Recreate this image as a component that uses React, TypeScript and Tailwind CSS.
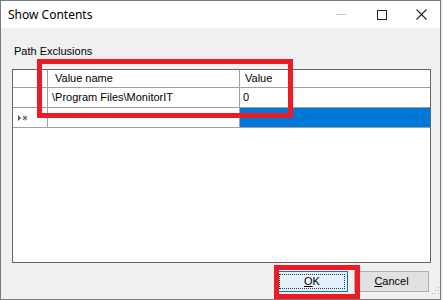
import React from "react";

export default function App() {
  const f = { fontFamily: '"Liberation Sans", Arial, sans-serif' };
  return (
    <div className="w-[443px] h-[300px] bg-[#f0f0f0] relative overflow-hidden" style={f}>
      <div className="w-[441px] h-[300px] border border-[#7a7a7a] flex flex-col bg-[#f0f0f0]">
        {/* title bar */}
        <div className="h-[27px] bg-white flex items-center shrink-0">
          <span className="pl-[7px] text-[12px] text-black" style={{ fontFamily: '"Noto Sans", "Open Sans", sans-serif' }}>Show Contents</span>
          <div className="ml-auto flex items-center h-full">
            <div className="w-[41px] h-full flex items-center justify-center">
              <div className="w-[10px] h-px bg-[#c8c8c8]" />
            </div>
            <div className="w-[41px] h-full flex items-center justify-center">
              <div className="w-[10px] h-[10px] border border-[#222]" />
            </div>
            <div className="w-[38px] h-full flex items-center justify-center">
              <svg width="11" height="11" viewBox="0 0 11 11"><path d="M0.5 0.5 L10.5 10.5 M10.5 0.5 L0.5 10.5" stroke="#222" strokeWidth="1.1" /></svg>
            </div>
          </div>
        </div>
        {/* body */}
        <div className="flex-1 flex flex-col pl-[11px] pr-[9px] pt-[17px]">
          <div className="text-[11px] leading-[13px] text-black pl-[2px]">Path Exclusions</div>
          <div className="mt-[11px] w-[419px] h-[194px] border border-[#646464] bg-white flex flex-col text-[11px] text-black">
            <div className="grid grid-cols-[35px_192px_1fr] h-[18px] border-b border-[#a0a0a0]">
              <div className="border-r border-[#a0a0a0]" />
              <div className="border-r border-[#a0a0a0] flex items-center pl-[7px]">Value name</div>
              <div className="flex items-center pl-[5px]">Value</div>
            </div>
            <div className="grid grid-cols-[35px_192px_1fr] h-[20px] border-b border-[#a0a0a0]">
              <div className="border-r border-[#a0a0a0]" />
              <div className="border-r border-[#a0a0a0] flex items-center pl-[4px]">\Program Files\MonitorIT</div>
              <div className="flex items-center pl-[3px]">0</div>
            </div>
            <div className="grid grid-cols-[35px_192px_1fr] h-[20px] border-b border-[#a0a0a0]">
              <div className="border-r border-[#a0a0a0] flex items-center pl-[5px]">
                <svg width="12" height="8" viewBox="0 0 12 8">
                  <path d="M0 1 L3 4 L0 7 Z" fill="#555" />
                  <path d="M5 2 L9 6 M9 2 L5 6 M7 1.5 V6.5 M4.5 4 H9.5" stroke="#555" strokeWidth="0.8" />
                </svg>
              </div>
              <div className="border-r border-[#a0a0a0]" />
              <div className="bg-[#0078d7]" />
            </div>
          </div>
          <div className="flex justify-end gap-[6px] mt-[8px] pr-[2px]">
            <div className="w-[72px] h-[21px] bg-[#e5f1fb] border border-[#0078d7] p-[2px]">
              <div className="w-full h-full border border-dotted border-[#333] flex items-center justify-center text-[11px]">
                <span><span className="underline">O</span>K</span>
              </div>
            </div>
            <div className="w-[75px] h-[21px] bg-[#e1e1e1] border border-[#adadad] flex items-center justify-center text-[11px]">
              <span><span className="underline">C</span>ancel</span>
            </div>
          </div>
        </div>
      </div>
      {/* size grip */}
      <svg className="absolute right-[3px] bottom-[3px]" width="10" height="10" viewBox="0 0 10 10">
        <rect x="8" y="0" width="1" height="1" fill="#b0b0b0" />
        <rect x="5" y="3" width="1" height="1" fill="#b0b0b0" />
        <rect x="8" y="3" width="1" height="1" fill="#b0b0b0" />
        <rect x="2" y="6" width="1" height="1" fill="#b0b0b0" />
        <rect x="5" y="6" width="1" height="1" fill="#b0b0b0" />
        <rect x="8" y="6" width="1" height="1" fill="#b0b0b0" />
      </svg>
      {/* red annotation boxes */}
      <div className="absolute left-[37px] top-[59px] w-[256px] h-[59px] border-[5px] border-[#ed1c24]" />
      <div className="absolute left-[274px] top-[265px] w-[86px] h-[34px] border-[5px] border-[#ed1c24]" />
    </div>
  );
}
